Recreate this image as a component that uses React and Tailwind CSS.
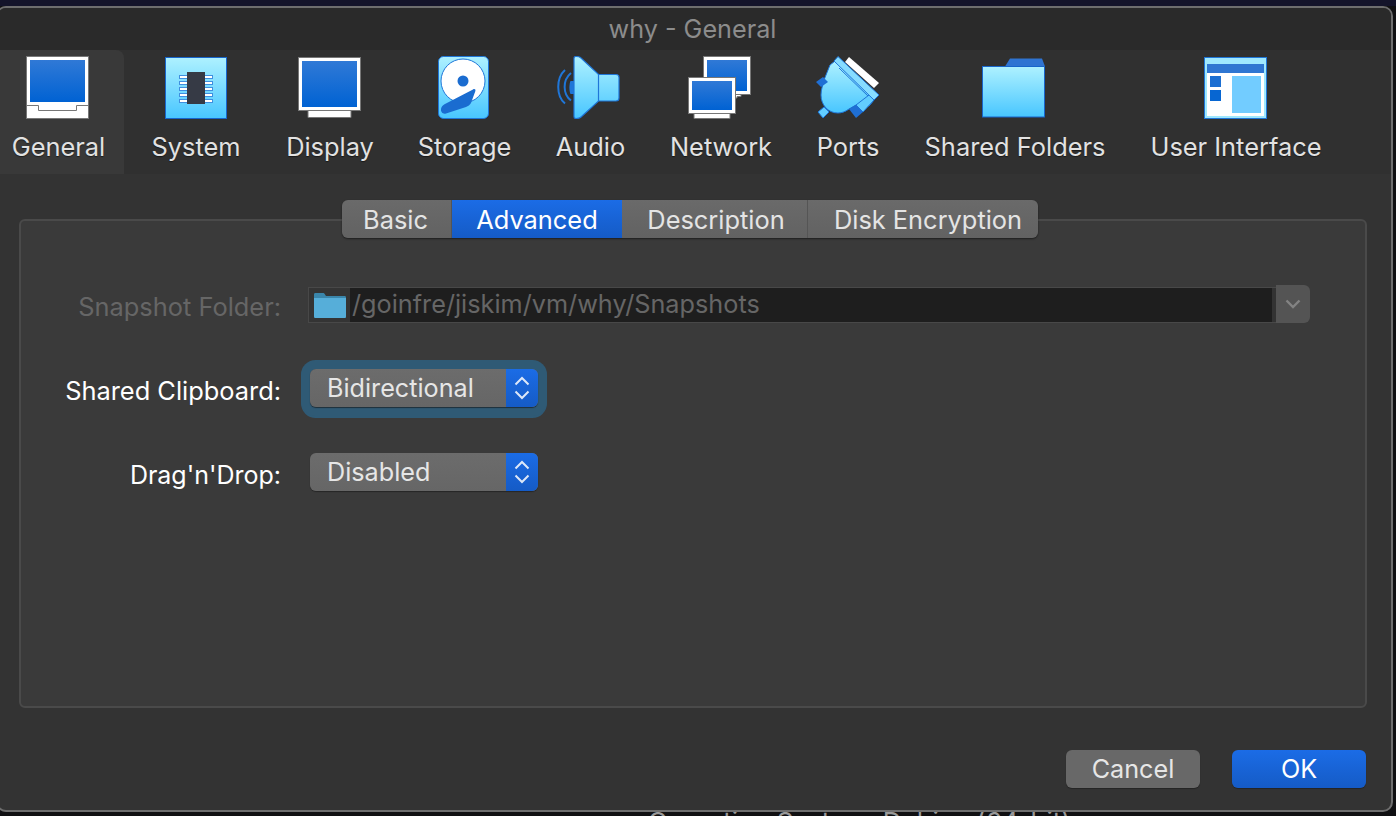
const GeneralIcon = () => (
  <svg width="63" height="63" viewBox="0 0 63 63">
    <rect x="0.5" y="0.5" width="62" height="62" fill="#fff" stroke="#777" />
    <rect x="4" y="4" width="55" height="42" fill="url(#blue)" />
    <path d="M0 49.5H12.5V54.5H50.5V49.5H63" fill="none" stroke="#777" />
  </svg>
);
const SystemIcon = () => (
  <svg width="62" height="62" viewBox="0 0 62 62">
    <rect x="0.5" y="0.5" width="61" height="61" fill="url(#light)" stroke="#1765cc" />
    {[19, 25, 31, 37, 43].map((y) => (
      <g key={y} fill="#fff" stroke="#3f8fe0">
        <rect x="14.5" y={y - 0.5} width="8" height="3" />
        <rect x="39.5" y={y - 0.5} width="8" height="3" />
      </g>
    ))}
    <rect x="22" y="15" width="18" height="32" fill="#363a45" />
  </svg>
);
const DisplayIcon = () => (
  <svg width="63" height="61" viewBox="0 0 63 61">
    <path d="M10 53H53V60.5H10Z" fill="#fff" stroke="#777" />
    <rect x="0.5" y="0.5" width="62" height="53" fill="#fff" stroke="#777" />
    <rect x="4" y="4" width="55" height="46" fill="url(#blue)" />
  </svg>
);
const StorageIcon = () => (
  <svg width="51" height="63" viewBox="0 0 51 63">
    <rect x="0.5" y="0.5" width="50" height="62" rx="5" fill="url(#light)" stroke="#1f76d8" />
    <circle cx="25" cy="25" r="22" fill="#fff" stroke="#1f76d8" />
    <circle cx="25" cy="25" r="5.5" fill="#1a6cd0" />
    <path d="M35 33.5C36.5 32.5 38 33.5 37.3 35.2L33 47C32 49 30 50 28 51L8 57.5C5 58.5 2.5 56 3 53C3.4 50.8 4.5 49.5 6.5 48.3Z" fill="#1a6cd0" />
  </svg>
);
const AudioIcon = () => (
  <svg width="63" height="63" viewBox="0 0 63 63">
    <path d="M13.5 25C12 28 12 35 13.5 38H17V25Z" fill="#1f76d8" />
    <g fill="none" stroke="#1f76d8" strokeWidth="2">
      <path d="M14 17C5.5 24 5.5 38 14 44.5" />
      <path d="M8 14C-1 22 -1 40 8 47.5" />
    </g>
    <path d="M19 0.5C21 0.5 23 1 24 2L41.5 18.5H59C61 18.5 62 19.5 62 21.5V42C62 44 61 45 59 45H41.5L24 61C23 62 21 62.5 19 62.5C17.6 62.5 17 61.8 17 60.5V2.5C17 1.2 17.6 0.5 19 0.5Z" fill="url(#light)" stroke="#1f76d8" strokeWidth="1.2" />
    <path d="M41.5 18.5V45" stroke="#1f76d8" fill="none" strokeWidth="1.2" />
  </svg>
);
const NetworkIcon = () => (
  <svg width="63" height="63" viewBox="0 0 63 63">
    <path d="M21 33H53V40.5H49V42H21Z" fill="#fff" stroke="#777" />
    <rect x="15.5" y="0.5" width="47" height="38" fill="#fff" stroke="#777" />
    <rect x="19" y="4" width="40" height="31" fill="url(#blue)" />
    <path d="M6 54H42V62.5H6Z" fill="#fff" stroke="#777" />
    <rect x="0.5" y="21.5" width="47" height="36" fill="#fff" stroke="#777" />
    <rect x="4" y="25" width="40" height="29" fill="url(#blue)" />
  </svg>
);
const PortsIcon = () => (
  <svg width="63" height="63" viewBox="0 0 63 63">
    <polygon points="33,1 63,27 58,32 29,6" fill="#fff" />
    <polygon points="2,56 8,51 13,56 7,62" fill="#62cdff" stroke="#1f76d8" />
    <path d="M14 9L19 5L58 44L53 50L40 49L33 53C29 56 25 57 22 57C12 57 5 49 5 39C5 33 7 29 8 24Z" fill="url(#light)" stroke="#1f76d8" />
    <path d="M23 12L53 41" stroke="#1f76d8" fill="none" />
    <polygon points="40,49 53,39 58,44 47,56" fill="#62cdff" stroke="#1f76d8" />
    <polygon points="33,53 40,49 47,56 40,62" fill="#1f6fd4" />
    <polygon points="0,26 7,21 12,26 5,31" fill="#1f6fd4" />
    <polygon points="22,0.5 63,39 58,44 18,5" fill="#86dcff" stroke="#1f76d8" />
  </svg>
);
const FolderIcon = () => (
  <svg width="63" height="60" viewBox="0 0 63 60">
    <path d="M23 8.5L28 0.5H60L63 8.5Z" fill="#2f74d2" />
    <rect x="0.5" y="8.5" width="62" height="50.5" fill="url(#light)" stroke="#1765cc" />
  </svg>
);
const UiIcon = () => (
  <svg width="63" height="62" viewBox="0 0 63 62">
    <rect x="0.5" y="0.5" width="62" height="61" fill="#9fe8ff" stroke="#1f76d8" />
    <rect x="3" y="7" width="57" height="52" fill="#fff" />
    <rect x="3" y="7" width="57" height="9" fill="#2f76d2" />
    <rect x="6" y="19" width="11" height="11" fill="#1c6fd2" />
    <rect x="6" y="33" width="11" height="11" fill="#0766d2" />
    <rect x="28" y="19" width="29" height="37" fill="#72ccff" />
  </svg>
);

const tools = [
  { label: "General", Icon: GeneralIcon, cls: "w-[126px] pl-[15px] pr-[20px] bg-[#393939] rounded-tr-lg", wrap: "w-[91px]", nudge: "mr-[2px]" },
  { label: "System", Icon: SystemIcon, cls: "w-[140px] pl-[27px] pr-[23px]", wrap: "w-[90px]", nudge: "" },
  { label: "Display", Icon: DisplayIcon, cls: "w-[132px] px-[23px]", wrap: "w-[86px]", nudge: "mr-[1px]" },
  { label: "Storage", Icon: StorageIcon, cls: "w-[138px] pl-[22px] pr-[23px]", wrap: "w-[93px]", nudge: "mr-[2px]" },
  { label: "Audio", Icon: AudioIcon, cls: "w-[114px] pl-[23px] pr-[24px]", wrap: "w-[67px]", nudge: "mr-[5px]" },
  { label: "Network", Icon: NetworkIcon, cls: "w-[146px] px-[23px]", wrap: "w-[100px]", nudge: "mr-[3px]" },
  { label: "Ports", Icon: PortsIcon, cls: "w-[108px] px-[23px]", wrap: "w-[62px]", nudge: "mr-[1px]" },
  { label: "Shared Folders", Icon: FolderIcon, cls: "w-[226px] px-[23px]", wrap: "w-[180px]", nudge: "mr-[3px]" },
  { label: "User Interface", Icon: UiIcon, cls: "w-[216px] px-[23px]", wrap: "w-[170px]", nudge: "mr-[1px]" },
];

const tabs = [
  { label: "Basic", cls: "w-[110px] rounded-l-md border-r border-[#555] pr-[2px]", text: "text-[#e4e4e4]" },
  { label: "Advanced", cls: "w-[170px] bg-gradient-to-b from-[#1b6ce6] to-[#155bc6]", text: "text-white" },
  { label: "Description", cls: "w-[186px] border-r border-[#555] pl-[3px]", text: "text-[#e4e4e4]" },
  { label: "Disk Encryption", cls: "w-[230px] rounded-r-md pl-[10px]", text: "text-[#e4e4e4]" },
];

const Chevrons = () => (
  <svg width="20" height="28" viewBox="0 0 20 28" fill="none" stroke="#fff" strokeWidth="2" opacity="0.85">
    <path d="M3.5 10.5L10 4L16.5 10.5" />
    <path d="M3.5 17.5L10 24L16.5 17.5" />
  </svg>
);

const Combo = ({ value, focused }) => (
  <div className={`ml-[2px] w-[228px] h-[38px] flex rounded-md bg-gradient-to-b from-[#6c6c6c] to-[#666] ${focused ? "shadow-[0_1px_1px_#1f2f3a,0_0_0_9px_#2f5a75,0_2px_0_9px_#2f5a75]" : "shadow-[0_1px_1px_rgba(0,0,0,0.35)]"}`}>
    <div className="flex-1 pl-[17px] text-[25.2px] leading-[38px] text-[#e6e6e6]">{value}</div>
    <div className="w-[32px] rounded-r-md flex items-center justify-center bg-gradient-to-b from-[#1b6ce6] to-[#155bc6]">
      <Chevrons />
    </div>
  </div>
);

export default function App() {
  return (
    <div className="w-[1396px] h-[816px] overflow-hidden bg-[#101012] font-['Inter','Liberation_Sans',sans-serif]">
      <svg className="absolute w-0 h-0">
        <defs>
          <linearGradient id="blue" x1="0" y1="0" x2="0" y2="1">
            <stop offset="0" stopColor="#3079d6" />
            <stop offset="1" stopColor="#0062d3" />
          </linearGradient>
          <linearGradient id="light" x1="0" y1="0" x2="0" y2="1">
            <stop offset="0" stopColor="#aef1ff" />
            <stop offset="1" stopColor="#48c6ff" />
          </linearGradient>
        </defs>
      </svg>
      <div className="h-[6px] bg-[#14142a]" />
      <div className="ml-[-4px] w-[1397px] h-[806px] flex flex-col border-2 border-[#6e6e6e] rounded-t-[10px] rounded-b-[10px] overflow-hidden bg-[#333333]">
        <div className="h-[42px] shrink-0 bg-[#2a2a2a] flex items-center justify-center text-[25.2px] text-[#8c8c8c] pr-[4px] pt-[2px]">
          why - General
        </div>
        <div className="h-[124px] shrink-0 bg-[#303030] flex">
          {tools.map(({ label, Icon, cls, wrap, nudge }) => (
            <div key={label} className={`shrink-0 flex flex-col items-center ${cls}`}>
              <div className={`h-[75px] flex items-center justify-center ${nudge}`}>
                <Icon />
              </div>
              <div className={`mt-[5px] flex justify-center whitespace-nowrap text-[25.4px] leading-[34px] text-[#e2e2e2] [text-shadow:0_1px_1px_rgba(0,0,0,0.5)] ${wrap}`}>
                {label}
              </div>
            </div>
          ))}
        </div>
        <div className="flex-1 flex flex-col pt-[26px] pb-[22px] pl-[21px] pr-[24px]">
          <div className="relative z-10 flex justify-center -mb-[19px] pr-[6px] h-[38px]">
            <div className="flex rounded-md bg-gradient-to-b from-[#6a6a6a] to-[#626262] shadow-[0_1px_2px_rgba(0,0,0,0.5)]">
              {tabs.map((t) => (
                <div key={t.label} className={`flex items-center justify-center pt-[3px] text-[25.4px] ${t.cls} ${t.text}`}>
                  {t.label}
                </div>
              ))}
            </div>
          </div>
          <div className="flex-1 rounded-md border-2 border-[#4a4a4a] bg-[#3a3a3a] pt-[64px] pr-[55px] flex flex-col gap-[46px]">
            <div className="flex h-[38px]">
              <div className="w-[260px] shrink-0 text-right text-[25.4px] leading-[44px] text-[#666]">Snapshot Folder:</div>
              <div className="ml-[27px] flex-1 flex h-[38px]">
                <div className="flex-1 flex mt-[2px] h-[36px] border border-[#484848] border-r-0">
                  <div className="w-[41px] shrink-0 bg-[#343434] flex items-center justify-center">
                    <svg width="32" height="25" viewBox="0 0 32 25">
                      <path d="M0 4V1.5C0 0.5 0.5 0 1.5 0H9C10 0 10.5 0.5 11 1.5L12 3H30.5C31.5 3 32 3.5 32 4.5V5H0Z" fill="#3a86ab" />
                      <path d="M0 5H32V23.5C32 24.5 31.5 25 30.5 25H1.5C0.5 25 0 24.5 0 23.5Z" fill="#56aed9" />
                    </svg>
                  </div>
                  <div className="flex-1 bg-[#1e1e1e] pl-[2px] text-[25.25px] leading-[32px] text-[#666] whitespace-nowrap">/goinfre/jiskim/vm/why/Snapshots</div>
                  <div className="w-[4px] bg-[#333]" />
                </div>
                <div className="w-[34px] shrink-0 rounded-r-md bg-[#545454] flex items-center justify-center">
                  <svg width="16" height="10" viewBox="0 0 16 10" fill="none" stroke="#838383" strokeWidth="2.4">
                    <path d="M1.5 1.5L8 8L14.5 1.5" />
                  </svg>
                </div>
              </div>
            </div>
            <div className="flex h-[38px] items-start">
              <div className="w-[260px] shrink-0 text-right text-[25.4px] leading-[44px] text-white">Shared Clipboard:</div>
              <div className="ml-[27px]"><Combo value="Bidirectional" focused /></div>
            </div>
            <div className="flex h-[38px] items-start">
              <div className="w-[260px] shrink-0 text-right text-[25px] leading-[44px] text-white">Drag'n'Drop:</div>
              <div className="ml-[27px]"><Combo value="Disabled" /></div>
            </div>
          </div>
          <div className="mt-[42px] h-[38px] flex justify-end gap-[32px] pr-[1px]">
            <div className="w-[134px] rounded-md bg-[#686868] flex items-center justify-center pt-[2px] text-[25.2px] text-[#e6e6e6] shadow-[0_1px_1px_rgba(0,0,0,0.3)]">Cancel</div>
            <div className="w-[134px] rounded-md bg-gradient-to-b from-[#1b6ce6] to-[#155bc6] flex items-center justify-center pt-[2px] text-[25.2px] text-white shadow-[0_1px_1px_rgba(0,0,0,0.3)]">OK</div>
          </div>
        </div>
      </div>
      <div className="pl-[648px] text-[26px] leading-[20px] text-[#999] whitespace-nowrap h-[4px] overflow-hidden">
        Operating System: Debian (64-bit)
      </div>
    </div>
  );
}
